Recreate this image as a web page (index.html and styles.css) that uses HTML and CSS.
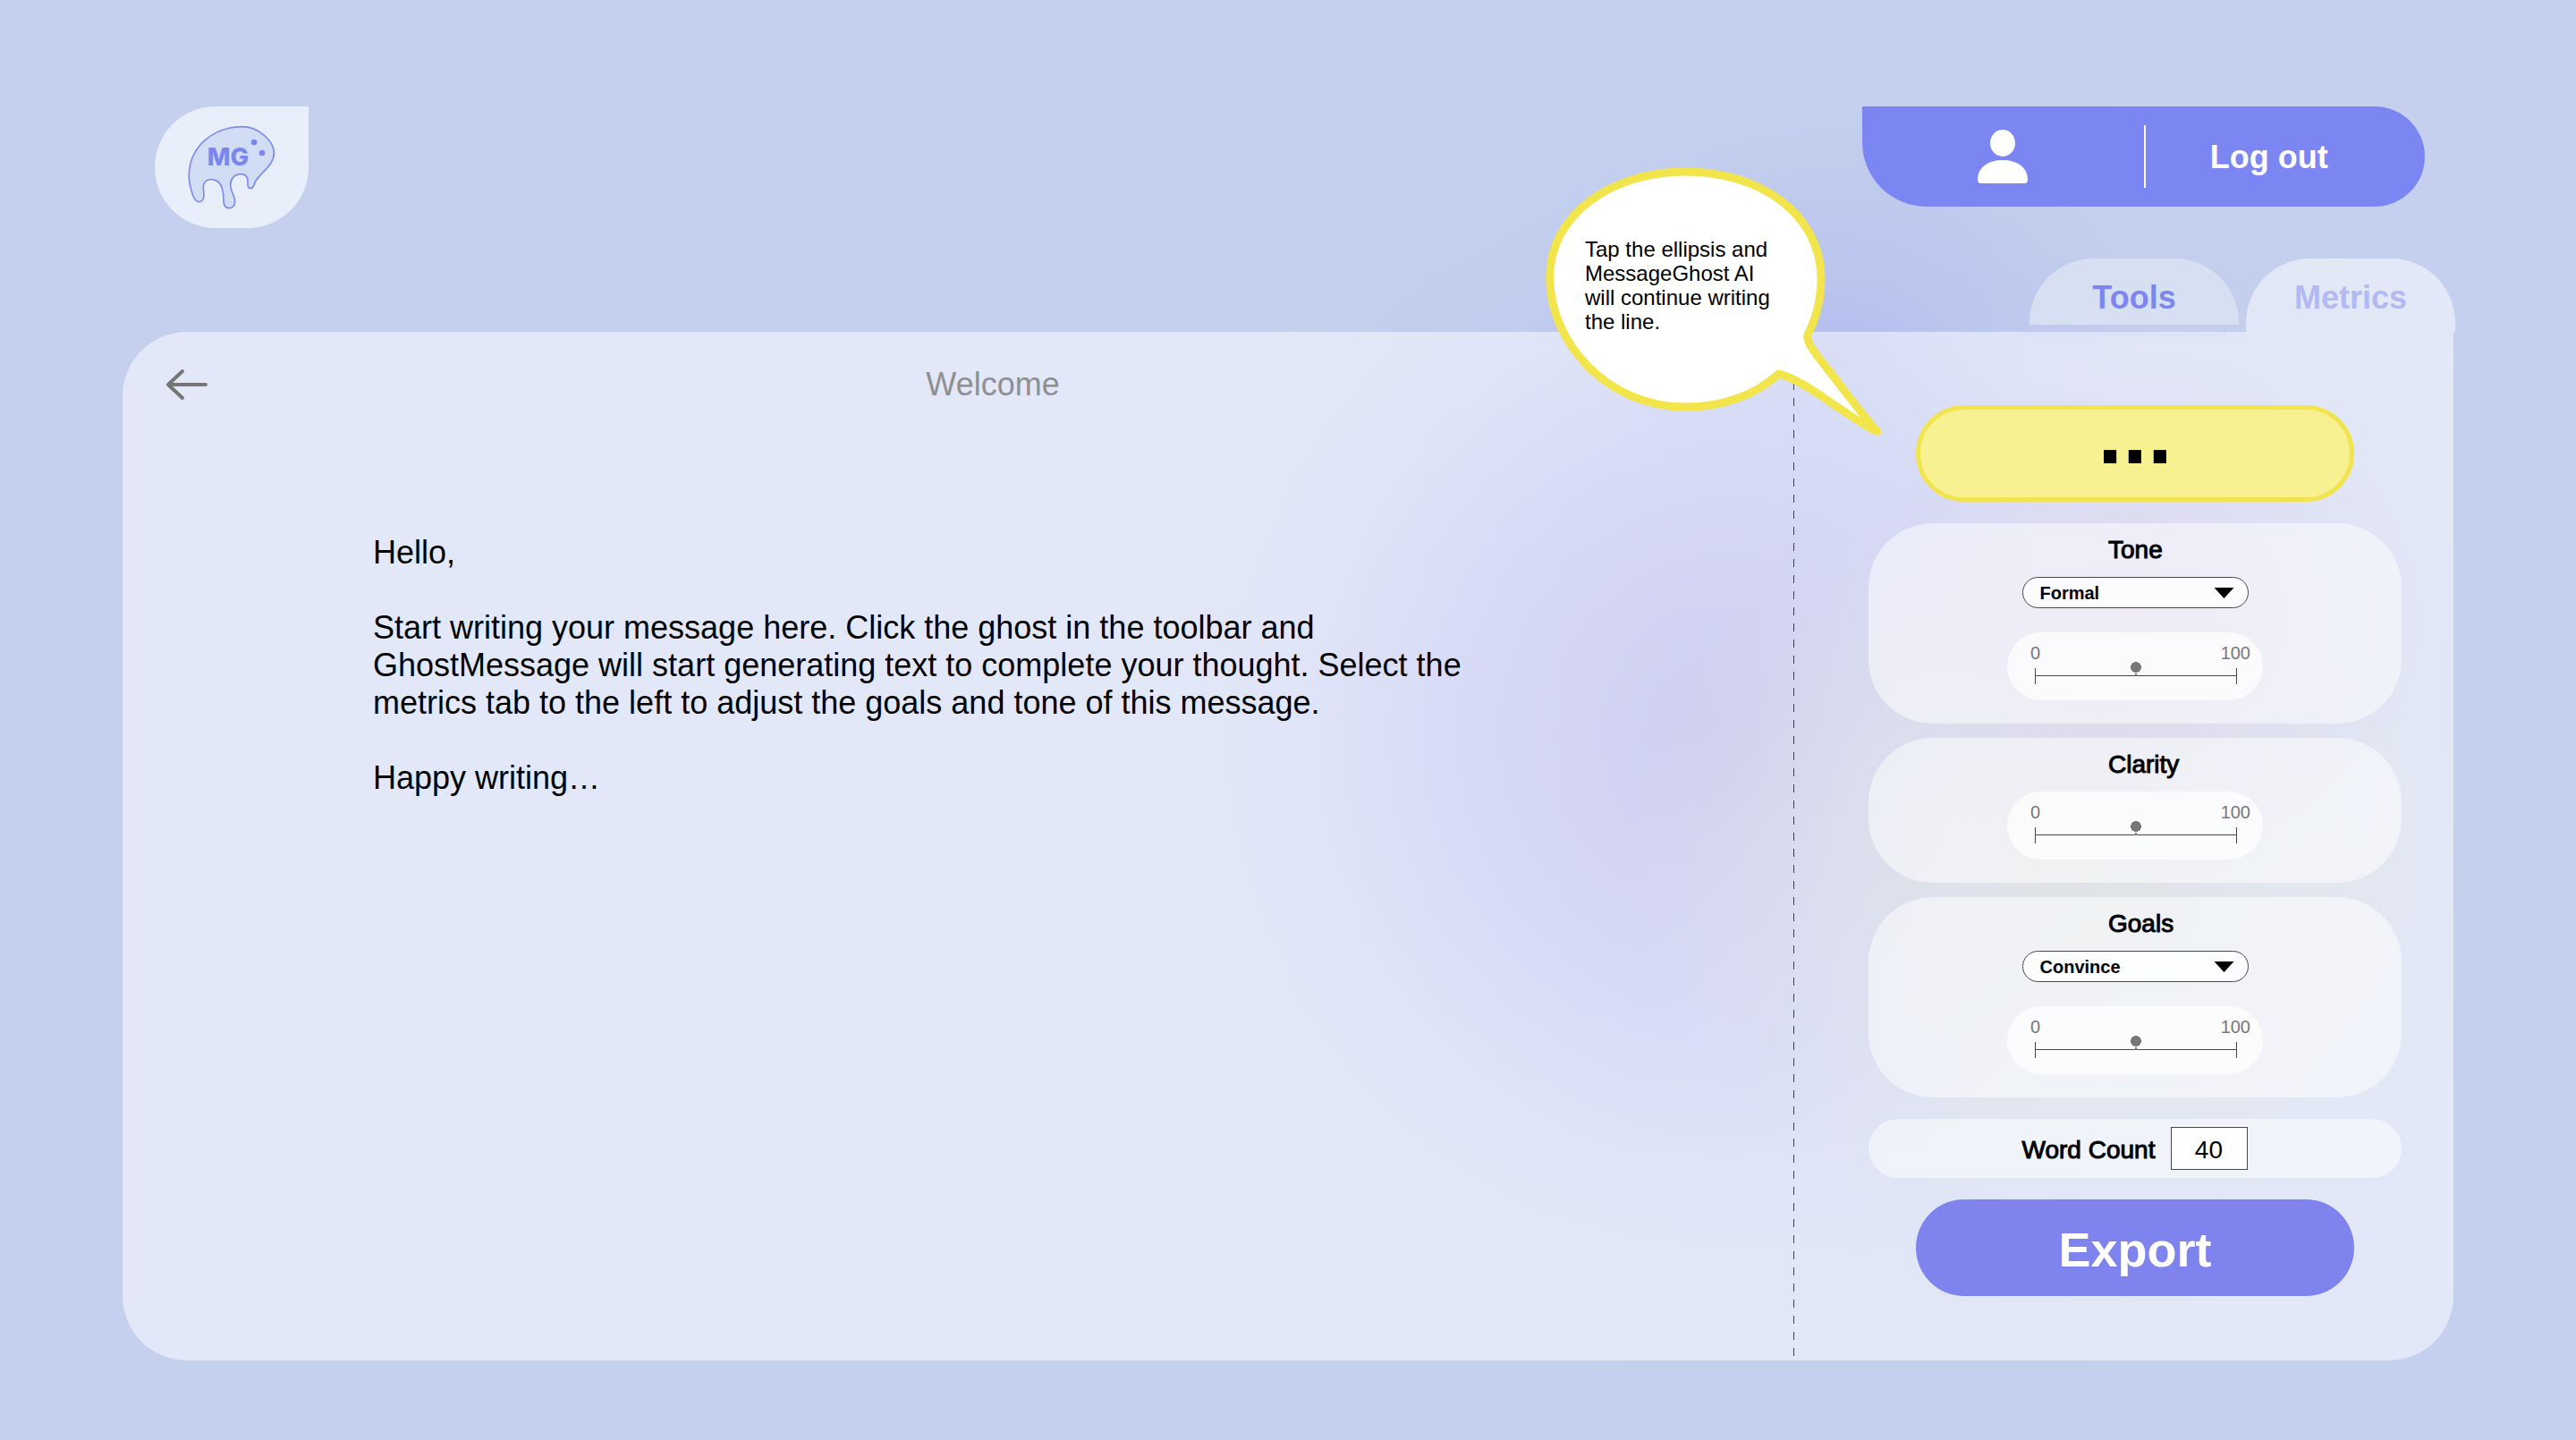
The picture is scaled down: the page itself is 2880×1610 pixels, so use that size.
FILE: index.html
```html
<!DOCTYPE html>
<html lang="en">
<head>
<meta charset="utf-8">
<title>MessageGhost</title>
<link rel="stylesheet" href="styles.css">
</head>
<body>
<div class="page">
  <header class="topbar">
    <a class="logo" href="#" aria-label="MessageGhost home">
      <svg width="100" height="95" viewBox="270 150 300 285" aria-hidden="true">
        <path d="M457 155C505 155 562 200 562 243C562 285 520 305 500 338C495 348 494 362 484 362C472 362 474 350 474 338C474 322 464 314 450 314C430 314 416 330 416 350C416 372 431 388 431 405C431 420 422 428 411 428C398 428 393 415 393 402C393 375 390 332 351 332C335 332 325 342 325 358C325 372 328 380 326 392C324 402 318 407 311 407C300 407 293 395 288 380C280 355 276 335 277 315C280 220 360 155 457 155Z" fill="#d1dcf5" stroke="#7f8aea" stroke-width="5"/>
        <text class="logo-text" x="338" y="284">MG</text>
        <circle cx="495" cy="207" r="10" fill="#7b86ee"/>
        <circle cx="522" cy="243" r="10" fill="#7b86ee"/>
      </svg>
    </a>
    <nav class="account">
      <a class="account-item" href="#" aria-label="Profile">
        <svg width="56" height="60" viewBox="0 0 56 60" fill="#fff" aria-hidden="true">
          <ellipse cx="28" cy="15" rx="14" ry="15"/>
          <path d="M0 56C0 42 12 34 28 34S56 42 56 56Q56 60 52 60H4Q0 60 0 56Z"/>
        </svg>
      </a>
      <a class="account-item account-logout" href="#">Log out</a>
    </nav>
  </header>

  <div class="tabs">
    <button class="tab tab-tools" type="button">Tools</button>
    <button class="tab tab-metrics" type="button">Metrics</button>
  </div>

  <main class="workspace">
    <section class="editor">
      <div class="editor-head">
        <a class="back" href="#" aria-label="Back">
          <svg width="48" height="36" viewBox="0 0 48 36" fill="none" stroke="#757575" stroke-width="4" stroke-linecap="round" stroke-linejoin="round" aria-hidden="true">
            <path d="M45 18H3M19 3L3 18L19 33"/>
          </svg>
        </a>
        <h1 class="editor-title">Welcome</h1>
      </div>
      <textarea class="message" aria-label="Message">Hello,

Start writing your message here. Click the ghost in the toolbar and GhostMessage will start generating text to complete your thought. Select the metrics tab to the left to adjust the goals and tone of this message.

Happy writing…</textarea>
    </section>

    <aside class="sidebar">
      <button class="pill pill-continue" type="button" aria-label="Continue writing">...</button>

      <div class="cards">
        <section class="card">
          <h2 class="card-title">Tone</h2>
          <label class="picker">
            <select class="picker-select" aria-label="Tone"><option>Formal</option></select>
          </label>
          <div class="scale">
            <div class="scale-labels"><span>0</span><span>100</span></div>
            <input class="scale-range" type="range" min="0" max="100" value="50" aria-label="Tone level">
          </div>
        </section>

        <section class="card">
          <h2 class="card-title">Clarity</h2>
          <div class="scale">
            <div class="scale-labels"><span>0</span><span>100</span></div>
            <input class="scale-range" type="range" min="0" max="100" value="50" aria-label="Clarity level">
          </div>
        </section>

        <section class="card">
          <h2 class="card-title">Goals</h2>
          <label class="picker">
            <select class="picker-select" aria-label="Goal"><option>Convince</option></select>
          </label>
          <div class="scale">
            <div class="scale-labels"><span>0</span><span>100</span></div>
            <input class="scale-range" type="range" min="0" max="100" value="50" aria-label="Goals level">
          </div>
        </section>
      </div>

      <div class="count">
        <label class="count-label" for="word-count">Word Count</label>
        <input class="count-input" id="word-count" type="text" value="40">
      </div>

      <button class="pill pill-export" type="button">Export</button>
    </aside>

    <div class="hint" role="note">
      <svg class="hint-shape" width="376" height="301" viewBox="84 52 1128 903" aria-hidden="true">
        <path d="M553 67C810 67 1008 215 1008 425C1008 500 990 560 964 612C950 640 1010 700 1085 800Q1170 910 1196 938C1160 925 1100 880 1050 848Q920 755 865 745C790 815 680 856 553 856C290 856 98 640 98 420C98 215 300 67 553 67Z" fill="#fff" stroke="#f2e54b" stroke-width="27" stroke-linejoin="round"/>
      </svg>
      <p class="hint-text">Tap the ellipsis and MessageGhost AI will continue writing the line.</p>
    </div>
  </main>
</div>
</body>
</html>
```
FILE: styles.css
```css
* {
  box-sizing: border-box;
}

body {
  margin: 0;
  font-family: "Liberation Sans", Arial, sans-serif;
  color: #000;
  background-color: #c5d0ee;
  background-image:
    radial-gradient(ellipse 330px 300px at 83% 43%, rgba(182, 165, 218, 0.75), rgba(186, 165, 222, 0) 100%),
    radial-gradient(ellipse 480px 420px at 80% 60%, rgba(192, 200, 200, 0.9), rgba(200, 208, 208, 0.5) 50%, rgba(205, 212, 210, 0) 100%),
    radial-gradient(ellipse 300px 260px at 72% 24%, rgba(160, 174, 238, 0.3), rgba(175, 188, 240, 0) 100%),
    radial-gradient(ellipse 640px 660px at 67% 51%, rgba(148, 148, 220, 0.85), rgba(166, 172, 238, 0.65) 50%, rgba(190, 198, 244, 0.3) 78%, rgba(190, 200, 244, 0) 100%),
    radial-gradient(circle 780px at 72% 50%, rgba(190, 200, 232, 0.9), rgba(194, 206, 236, 0.5) 85%, rgba(197, 208, 238, 0) 100%);
}

.page {
  display: flex;
  flex-direction: column;
  min-height: 100vh;
  padding: 119px 137px 89px;
}

/* Top bar */

.topbar {
  display: flex;
  justify-content: space-between;
  align-items: flex-start;
  padding: 0 32px 0 36px;
}

.logo {
  display: flex;
  align-items: center;
  justify-content: center;
  width: 172px;
  height: 136px;
  border-radius: 68px 0 68px 68px;
  background: #e9eefb;
}

.logo-text {
  font: 800 82px Inter, sans-serif;
  fill: #7b86ee;
}

.account {
  display: grid;
  grid-template-columns: 1fr 1fr;
  align-items: center;
  width: 629px;
  height: 112px;
  border-radius: 0 56px 56px 72px;
  background: #7c86f2;
}

.account-item {
  display: flex;
  align-items: center;
  justify-content: center;
  height: 70px;
  color: #fff;
  font-size: 36px;
  font-weight: 700;
  text-decoration: none;
}

.account-logout {
  padding: 2px 36px 0 0;
  border-left: 2px solid #fff;
}

/* Tabs */

.tabs {
  display: flex;
  justify-content: flex-end;
  align-items: flex-start;
  gap: 8px;
  margin: 34px -2px 0 0;
}

.tab {
  width: 234px;
  height: 82px;
  padding: 6px 0 0;
  border: 0;
  border-radius: 72px 72px 0 0;
  background: rgba(255, 255, 255, 0.5);
  font: 700 36px "Liberation Sans", Arial, sans-serif;
}

.tab-tools {
  position: relative;
  z-index: 1;
  height: 74px;
  padding-top: 14px;
  background: #d7e0f3;
  color: #7c86ee;
}

.tab-tools::after {
  content: "";
  position: absolute;
  top: 82px;
  right: 14px;
  width: 232px;
  height: 5px;
  background: #dae4f6;
}

.tab-metrics {
  color: #b2b9f3;
}

/* Workspace */

.workspace {
  position: relative;
  display: grid;
  grid-template-columns: 1fr 738px;
  flex: 1;
  border-radius: 72px 0 72px 72px;
  background: rgba(255, 255, 255, 0.5);
}

.editor {
  display: flex;
  flex-direction: column;
}

.editor-head {
  display: flex;
  align-items: center;
  padding: 38px 18px 0 48px;
}

.back {
  display: flex;
}

.editor-title {
  flex: 1;
  margin: 0;
  color: #8f8f91;
  font-size: 36px;
  font-weight: 400;
  line-height: 42px;
  text-align: center;
}

.message {
  flex: 1;
  max-width: 1240px;
  margin: 146px 0 80px 280px;
  padding: 0;
  border: 0;
  outline: 0;
  resize: none;
  overflow: hidden;
  background: none;
  color: #000;
  font: 400 36px/42px "Liberation Sans", Arial, sans-serif;
}

/* Sidebar */

.sidebar {
  display: flex;
  flex-direction: column;
  align-items: center;
  gap: 24px;
  padding: 82px 58px 72px 84px;
  background: repeating-linear-gradient(#3f3f46 0 9px, transparent 9px 18px) 0 2px / 1px 100% no-repeat;
}

.pill {
  width: 490px;
  height: 108px;
  padding: 4px 0 0;
  border: 0;
  border-radius: 54px;
  font: 700 54px "Liberation Sans", Arial, sans-serif;
}

.pill-continue {
  padding: 0 0 48px;
  border: 5px solid #f1e44e;
  background: #f8f192;
  color: #000;
  font-size: 100px;
  line-height: 50px;
}

.pill-export {
  background: #7f83ed;
  color: #fff;
}

.cards {
  display: flex;
  flex-direction: column;
  gap: 16px;
  width: 100%;
}

.card {
  display: flex;
  flex-direction: column;
  align-items: center;
  padding: 14px 0 26px;
  border-radius: 72px;
  background: rgba(255, 255, 255, 0.5);
}

.card-title {
  width: 60px;
  margin: 0 0 14px;
  font-size: 28px;
  font-weight: 400;
  line-height: 32px;
  white-space: nowrap;
  -webkit-text-stroke: 1px #000;
}

.picker {
  position: relative;
  width: 253px;
  margin-bottom: 27px;
}

.picker::after {
  content: "";
  position: absolute;
  top: 12px;
  right: 16px;
  width: 22px;
  height: 12px;
  background: #000;
  clip-path: polygon(0 0, 100% 0, 50% 100%);
  pointer-events: none;
}

.picker-select {
  display: block;
  width: 100%;
  height: 35px;
  padding: 0 40px 0 19px;
  border: 1px solid #48484c;
  border-radius: 18px;
  appearance: none;
  background: rgba(255, 255, 255, 0.8);
  color: #000;
  font: 700 20px "Liberation Sans", Arial, sans-serif;
}

.scale {
  width: 286px;
  height: 76px;
  padding-top: 13px;
  border-radius: 38px;
  background: rgba(255, 255, 255, 0.75);
}

.scale-labels {
  display: flex;
  justify-content: space-between;
  padding: 0 14px 0 26px;
  color: #77777a;
  font-size: 20px;
  line-height: 20px;
}

.scale-range {
  display: block;
  width: 226px;
  height: 26px;
  margin: 0 0 0 31px;
  appearance: none;
  background:
    linear-gradient(#48484c, #48484c) 0 15px / 100% 1px no-repeat,
    linear-gradient(#48484c, #48484c) 0 7px / 1px 18px no-repeat,
    linear-gradient(#48484c, #48484c) 100% 7px / 1px 18px no-repeat;
}

.scale-range::-webkit-slider-runnable-track {
  height: 26px;
}

.scale-range::-webkit-slider-thumb {
  appearance: none;
  width: 12px;
  height: 16px;
  background:
    radial-gradient(circle 6px at 6px 6px, #77777a 95%, transparent) no-repeat,
    linear-gradient(#77777a, #77777a) 5px 13px / 2px 3px no-repeat;
}

.count {
  display: flex;
  align-items: center;
  justify-content: center;
  gap: 18px;
  width: 100%;
  height: 66px;
  border-radius: 33px;
  background: rgba(255, 255, 255, 0.5);
}

.count-label {
  padding-top: 3px;
  font-size: 28px;
  -webkit-text-stroke: 1px #000;
}

.count-input {
  width: 86px;
  height: 48px;
  padding: 4px 2px 0 0;
  border: 1px solid #48484c;
  background: rgba(255, 255, 255, 0.9);
  color: #000;
  font: 400 28px "Liberation Sans", Arial, sans-serif;
  text-align: center;
}

/* Speech bubble lying over the workspace edge */

.hint {
  position: absolute;
  top: -184px;
  right: 639px;
  width: 376px;
  height: 301px;
}

.hint-shape {
  display: block;
}

.hint-text {
  position: absolute;
  top: 78px;
  left: 44px;
  width: 216px;
  margin: 0;
  font-size: 24px;
  line-height: 27px;
}
```
